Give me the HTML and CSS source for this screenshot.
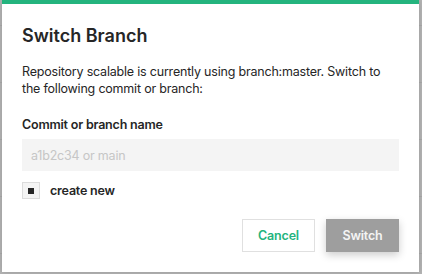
FILE: index.html
```html
<!DOCTYPE html>
<html lang="en">
<head>
    <meta charset="UTF-8">
    <meta name="viewport" content="width=device-width, initial-scale=1.0">
    <title>Switch Branch</title>
    <link rel="stylesheet" href="styles.css">
</head>
<body>
    <div class="backdrop">
        <div class="modal">
            <h2 class="modal-title">Switch Branch</h2>
            <p class="modal-text">Repository scalable is currently using branch:master. Switch to the following commit or branch:</p>
            <label class="field-label" for="branchName">Commit or branch name</label>
            <input type="text" id="branchName" class="field-input" placeholder="a1b2c34 or main">
            <label class="check-row">
                <span class="check-box"><span class="check-mark"></span></span>
                <span class="check-text">create new</span>
            </label>
            <div class="modal-actions">
                <button class="btn btn-secondary">Cancel</button>
                <button class="btn btn-primary">Switch</button>
            </div>
        </div>
    </div>
</body>
</html>
```

FILE: styles.css
```css
body {
    margin: 0;
    font-family: Inter, "Noto Sans", sans-serif;
    font-size: 12.5px;
    letter-spacing: -0.2px;
    color: #262626;
    background-color: #b4b4b4;
}
.backdrop {
    height: 274px;
    padding: 0 3px 0 2px;
    box-sizing: border-box;
    background-image: repeating-linear-gradient(to bottom, transparent 0, transparent 25px, #a9a9a9 25px, #a9a9a9 26px, transparent 26px, transparent 57px);
}
.modal {
    height: 272px;
    box-sizing: border-box;
    background: #ffffff;
    border-top: 4px solid #24b47e;
    padding: 20px 20px 0 20px;
    box-shadow: 0 0 6px rgba(0, 0, 0, 0.15);
}
.modal-title {
    margin: 0;
    font-size: 18px;
    line-height: 24px;
    font-weight: 600;
    letter-spacing: 0;
}
.modal-text {
    margin: 15px 0 0 0;
    line-height: 17px;
}
.field-label {
    display: block;
    margin-top: 19px;
    line-height: 17px;
    font-weight: 600;
}
.field-input {
    display: block;
    width: 100%;
    box-sizing: border-box;
    height: 32px;
    margin-top: 6px;
    padding: 0 9px;
    border: none;
    outline: none;
    background: #f4f4f4;
    font-family: inherit;
    font-size: 12.5px;
    letter-spacing: -0.2px;
    color: #262626;
}
.field-input::placeholder {
    color: #c6c6c6;
}
.check-row {
    display: flex;
    align-items: center;
    gap: 10px;
    margin-top: 11px;
}
.check-box {
    display: flex;
    align-items: center;
    justify-content: center;
    width: 18px;
    height: 17px;
    box-sizing: border-box;
    border: 1px solid #dcdcdc;
    background: #f4f4f4;
}
.check-mark {
    width: 6px;
    height: 6px;
    background: #262626;
}
.check-text {
    font-weight: 600;
}
.modal-actions {
    display: flex;
    justify-content: flex-end;
    gap: 11px;
    margin-top: 20px;
}
.btn {
    height: 33px;
    padding: 0;
    font-family: inherit;
    font-size: 12.5px;
    letter-spacing: -0.2px;
    font-weight: 600;
    border: none;
    cursor: pointer;
}
.btn-secondary {
    width: 73px;
    background: #ffffff;
    color: #24b47e;
    border: 1px solid #e0e0e0;
}
.btn-primary {
    width: 73px;
    background: #9e9e9e;
    color: #f4f4f4;
    box-shadow: 0 3px 8px rgba(0, 0, 0, 0.2);
}
```
